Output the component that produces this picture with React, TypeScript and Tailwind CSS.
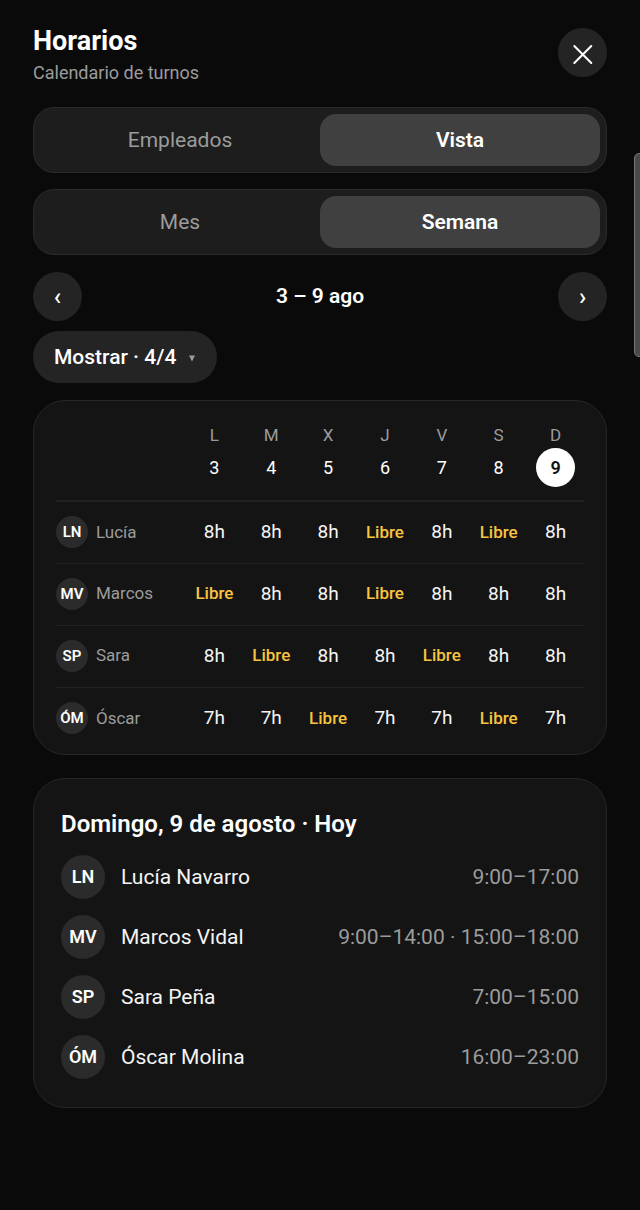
import { useState } from "react"

type Employee = {
  initials: string
  name: string
  surname: string
  week: string[]
  today: string
}

const days = [
  { letter: "L", day: 3 },
  { letter: "M", day: 4 },
  { letter: "X", day: 5 },
  { letter: "J", day: 6 },
  { letter: "V", day: 7 },
  { letter: "S", day: 8 },
  { letter: "D", day: 9 },
]

const today = 9

const employees: Employee[] = [
  { initials: "LN", name: "Lucía", surname: "Navarro", week: ["8h", "8h", "8h", "Libre", "8h", "Libre", "8h"], today: "9:00–17:00" },
  { initials: "MV", name: "Marcos", surname: "Vidal", week: ["Libre", "8h", "8h", "Libre", "8h", "8h", "8h"], today: "9:00–14:00 · 15:00–18:00" },
  { initials: "SP", name: "Sara", surname: "Peña", week: ["8h", "Libre", "8h", "8h", "Libre", "8h", "8h"], today: "7:00–15:00" },
  { initials: "ÓM", name: "Óscar", surname: "Molina", week: ["7h", "7h", "Libre", "7h", "7h", "Libre", "7h"], today: "16:00–23:00" },
]

const Segmented = ({ label, options, initial }: { label: string; options: string[]; initial: string }) => {
  const [value, setValue] = useState(initial)

  return (
    <div role="group" aria-label={label} className="grid grid-cols-2 rounded-[21px] border border-[#2b2b2b] bg-[#1d1d1d] p-1.5">
      {options.map(option => (
        <button
          key={option}
          type="button"
          aria-pressed={value === option}
          onClick={() => setValue(option)}
          className={
            value === option
              ? "h-[52px] rounded-2xl bg-[#404040] pt-0.5 text-[21px] font-semibold text-white"
              : "h-[52px] rounded-2xl pt-0.5 text-[21px] text-[#9c9c9c]"
          }
        >
          {option}
        </button>
      ))}
    </div>
  )
}

const WeekTable = () => (
  <section className="mt-[17px] rounded-[32px] border border-[#262626] bg-[#141414] px-[22px] pt-[22px] pb-[5px]">
    <table className="w-full table-fixed border-collapse">
      <thead>
        <tr className="border-b-2 border-[#222222]">
          <th className="w-[130px]" aria-label="Empleado"></th>
          {days.map(({ letter, day }) => (
            <th key={day} className="p-0 pb-[13px] font-normal">
              <div className="flex flex-col items-center">
                <span className="h-[25px] text-[17px] leading-6 text-[#9c9c9c]">{letter}</span>
                <span
                  className={
                    day === today
                      ? "flex size-[39px] items-center justify-center rounded-full bg-white text-lg font-semibold text-[#141414]"
                      : "flex size-[39px] items-center justify-center text-lg text-white"
                  }
                >
                  {day}
                </span>
              </div>
            </th>
          ))}
        </tr>
      </thead>
      <tbody>
        {employees.map(({ initials, name, week }) => (
          <tr key={initials} className="h-[62px] border-b border-[#222222] last:border-b-0">
            <th scope="row" className="p-0 font-normal">
              <div className="flex items-center gap-2">
                <span className="flex size-8 items-center justify-center rounded-full bg-[#2b2b2b] text-[15px] font-semibold text-white">{initials}</span>
                <span className="text-[17px] text-[#9c9c9c]">{name}</span>
              </div>
            </th>
            {week.map((hours, i) => (
              <td
                key={days[i].day}
                className={
                  hours === "Libre"
                    ? "p-0 text-center text-[17px] font-medium text-[#f8c440]"
                    : "p-0 text-center text-[19px] text-[#f5f5f5]"
                }
              >
                {hours}
              </td>
            ))}
          </tr>
        ))}
      </tbody>
    </table>
  </section>
)

const DayCard = () => (
  <section className="mt-[23px] rounded-[32px] border border-[#262626] bg-[#141414] px-[27px] pt-[30px] pb-5">
    <h2 className="text-2xl leading-[30px] font-semibold text-white">Domingo, 9 de agosto · Hoy</h2>
    <ul className="mt-2">
      {employees.map(({ initials, name, surname, today }) => (
        <li key={initials} className="flex h-[60px] items-center gap-4 text-[21px] leading-8">
          <span className="flex size-11 items-center justify-center rounded-full bg-[#2b2b2b] text-lg font-semibold text-white">{initials}</span>
          <span className="text-[#f5f5f5]">{name} {surname}</span>
          <span className="ml-auto text-[#9c9c9c]">{today}</span>
        </li>
      ))}
    </ul>
  </section>
)

const App = () => {
  return (
    <div className="relative min-h-screen overflow-hidden bg-[#0a0a0a] px-[33px] pt-6 pb-24 font-[Roboto,sans-serif]">
      <header className="flex items-start justify-between">
        <div>
          <h1 className="text-[27px] leading-[34px] font-bold text-white">Horarios</h1>
          <p className="mt-1 text-lg leading-[22px] text-[#9c9c9c]">Calendario de turnos</p>
        </div>
        <button type="button" aria-label="Cerrar" className="mt-1 flex size-[49px] items-center justify-center rounded-full bg-[#242424] text-white">
          <svg viewBox="0 0 24 24" className="size-6" fill="none" stroke="currentColor" strokeWidth="2" strokeLinecap="round" aria-hidden="true">
            <path d="M3.3 5 20.3 22M20.3 5 3.3 22" />
          </svg>
        </button>
      </header>

      <div className="mt-[23px] flex flex-col gap-4">
        <Segmented label="Sección" options={["Empleados", "Vista"]} initial="Vista" />
        <Segmented label="Periodo" options={["Mes", "Semana"]} initial="Semana" />
      </div>

      <nav aria-label="Semana" className="mt-[17px] flex items-center justify-between">
        <button type="button" aria-label="Semana anterior" className="size-[49px] rounded-full bg-[#242424] text-2xl font-medium text-white">‹</button>
        <span className="text-[21px] font-semibold text-white">3 – 9 ago</span>
        <button type="button" aria-label="Semana siguiente" className="size-[49px] rounded-full bg-[#242424] text-2xl font-medium text-white">›</button>
      </nav>

      <button type="button" aria-haspopup="menu" className="mt-2.5 flex h-[52px] items-center gap-3 rounded-full bg-[#242424] px-[21px] pt-0.5 text-[21px] font-medium text-white">
        Mostrar · 4/4
        <svg viewBox="0 0 8 8" className="size-2 fill-[#9c9c9c]" aria-hidden="true">
          <path d="M1 1.5h6L4 7.5z" />
        </svg>
      </button>

      <WeekTable />
      <DayCard />

      {/* edge panel handle */}
      <div className="absolute top-[153px] -right-1 h-[204px] w-2.5 rounded-md border border-[#777777] bg-[#4a4a4a]"></div>
    </div>
  )
}

export default App
